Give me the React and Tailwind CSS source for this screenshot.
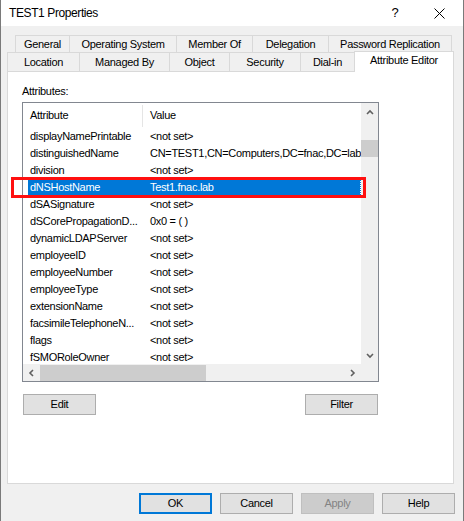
const TOP_TABS = [
  ['General', 'w-[54px]'],
  ['Operating System', 'w-[107px]'],
  ['Member Of', 'w-[76px]'],
  ['Delegation', 'w-[76px]'],
  ['Password Replication', 'w-[124px]'],
]

const FRONT_TABS = [
  ['Location', 'w-[72px]'],
  ['Managed By', 'w-[90px]'],
  ['Object', 'w-[60px]'],
  ['Security', 'w-[71px]'],
  ['Dial-in', 'w-[54px]'],
]

const ROWS = [
  ['displayNamePrintable', '<not set>'],
  ['distinguishedName', 'CN=TEST1,CN=Computers,DC=fnac,DC=lab'],
  ['division', '<not set>'],
  ['dNSHostName', 'Test1.fnac.lab', true],
  ['dSASignature', '<not set>'],
  ['dSCorePropagationD...', '0x0 = ( )'],
  ['dynamicLDAPServer', '<not set>'],
  ['employeeID', '<not set>'],
  ['employeeNumber', '<not set>'],
  ['employeeType', '<not set>'],
  ['extensionName', '<not set>'],
  ['facsimileTelephoneN...', '<not set>'],
  ['flags', '<not set>'],
  ['fSMORoleOwner', '<not set>'],
]

function Chevron({ dir }) {
  const paths = {
    up: 'M1 5 L4 2 L7 5',
    down: 'M1 2 L4 5 L7 2',
    left: 'M5 1 L2 4 L5 7',
    right: 'M2 1 L5 4 L2 7',
  }
  const vert = dir === 'up' || dir === 'down'
  return (
    <svg width={vert ? 8 : 7} height={vert ? 7 : 8} viewBox={vert ? '0 0 8 7' : '0 0 7 8'}>
      <path d={paths[dir]} fill="none" stroke="#606060" strokeWidth="1.6" />
    </svg>
  )
}

function Btn({ children, variant }) {
  const styles = {
    default: 'bg-[#e1e1e1] border border-[#adadad] text-black',
    primary: 'bg-[#e1e1e1] border-2 border-[#0078d7] text-black',
    disabled: 'bg-[#cccccc] border border-[#bfbfbf] text-[#838383]',
  }
  return (
    <div className={`w-[73px] h-[21px] flex items-center justify-center ${styles[variant || 'default']}`}>
      {children}
    </div>
  )
}

export default function App() {
  return (
    <div className="relative w-[464px] h-[521px] bg-[#f0f0f0] border-x border-[#7a7a7a] overflow-hidden text-black text-[11px] tracking-[-0.3px] font-['Liberation_Sans',Arial,sans-serif]">
      {/* Title bar */}
      <div className="h-[26px] bg-white flex items-center">
        <span className="flex-1 pl-[8px] text-[12px] tracking-[-0.4px]">TEST1 Properties</span>
        <span className="w-[12px] text-center text-[13px]">?</span>
        <span className="ml-[33px] mr-[18px] flex items-center">
          <svg width="11" height="11" viewBox="0 0 11 11">
            <path d="M0.5 0.5 L10.5 10.5 M10.5 0.5 L0.5 10.5" stroke="#000" strokeWidth="1" />
          </svg>
        </span>
      </div>

      {/* Tabs */}
      <div className="pt-[9px]">
        <div className="flex ml-[14px] h-[17px]">
          {TOP_TABS.map(([label, w], i) => (
            <div
              key={label}
              className={`${w} h-full flex items-center justify-center border-t border-l border-[#d9d9d9] ${i === TOP_TABS.length - 1 ? 'border-r' : ''}`}
            >
              {label}
            </div>
          ))}
        </div>
        <div className="flex items-start ml-[6px] h-[19px]">
          {FRONT_TABS.map(([label, w]) => (
            <div key={label} className={`${w} h-full flex items-center justify-center border-t border-l border-[#d9d9d9]`}>
              {label}
            </div>
          ))}
          <div className="relative z-10 w-[100px] h-[21px] -mt-[1px] pb-[3px] bg-white flex items-center justify-center border-t border-x border-[#d9d9d9]">
            Attribute Editor
          </div>
        </div>
      </div>

      {/* Page */}
      <div className="ml-[6px] w-[447px] h-[413px] bg-white border border-[#d9d9d9]">
        <div className="pl-[14px] pt-[12px] leading-[14px]">Attributes:</div>

        <div className="ml-[14px] mt-[4px] w-[357px] h-[280px] border border-[#828790] grid grid-cols-[338px_17px] grid-rows-[261px_17px]">
          {/* list content */}
          <div className="overflow-hidden bg-white">
            <div className="h-[25px] flex items-center">
              <div className="w-[120px] h-[22px] pl-[7px] flex items-center border-r border-[#e5e5e5]">Attribute</div>
              <div className="pl-[7px]">Value</div>
            </div>
            {ROWS.map(([attr, val, sel]) => (
              <div key={attr} className="h-[17px] pl-[5px] flex">
                <div className={`flex-1 flex items-center whitespace-nowrap ${sel ? 'bg-[#0078d7] text-white border-r border-dotted border-white' : ''}`}>
                  <span className="w-[115px] pl-[2px] shrink-0 overflow-hidden">{attr}</span>
                  <span className="pl-[7px]">{val}</span>
                </div>
              </div>
            ))}
          </div>

          {/* vertical scrollbar */}
          <div className="bg-[#f0f0f0] flex flex-col">
            <div className="h-[17px] flex items-center justify-center pt-[2px]">
              <Chevron dir="up" />
            </div>
            <div className="h-[20px]" />
            <div className="h-[17px] bg-[#cdcdcd]" />
            <div className="flex-1" />
            <div className="h-[17px] flex items-center justify-center">
              <Chevron dir="down" />
            </div>
          </div>

          {/* horizontal scrollbar */}
          <div className="bg-[#f0f0f0] flex items-center">
            <div className="w-[17px] h-full flex items-center justify-center">
              <Chevron dir="left" />
            </div>
            <div className="w-[166px] h-[16px] bg-[#cdcdcd]" />
            <div className="flex-1" />
            <div className="w-[17px] h-full flex items-center justify-center">
              <Chevron dir="right" />
            </div>
          </div>
          <div className="bg-[#f0f0f0]" />
        </div>

        <div className="ml-[15px] mt-[12px] w-[355px] flex justify-between">
          <Btn>Edit</Btn>
          <Btn>Filter</Btn>
        </div>
      </div>

      {/* Dialog buttons */}
      <div className="mt-[9px] ml-[138px] flex gap-[8px]">
        <Btn variant="primary">OK</Btn>
        <Btn>Cancel</Btn>
        <Btn variant="disabled">Apply</Btn>
        <Btn>Help</Btn>
      </div>

      {/* annotation */}
      <div className="absolute left-[10px] top-[177px] w-[355px] h-[21px] border-[3px] border-[#ff1010] pointer-events-none" />
    </div>
  )
}
